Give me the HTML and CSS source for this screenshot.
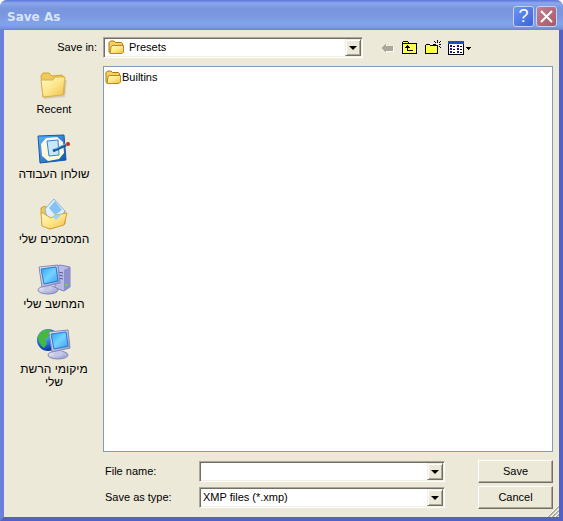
FILE: index.html
```html
<!DOCTYPE html>
<html lang="en">
<head>
  <meta charset="UTF-8">
  <title>Save As</title>
  <link rel="stylesheet" href="styles.css">
</head>
<body>

  <!-- Shared icons -->
  <svg class="defs" width="0" height="0" aria-hidden="true">
    <defs>
      <linearGradient id="gold" x1="0" y1="0" x2="1" y2="1">
        <stop offset="0" stop-color="#fffbc4"/>
        <stop offset="0.5" stop-color="#fde68a"/>
        <stop offset="1" stop-color="#eec04a"/>
      </linearGradient>
      <linearGradient id="screen" x1="0" y1="0" x2="1" y2="1">
        <stop offset="0" stop-color="#2aa0f5"/>
        <stop offset="0.5" stop-color="#74d4ff"/>
        <stop offset="1" stop-color="#3a9cf4"/>
      </linearGradient>
      <linearGradient id="metal" x1="0" y1="0" x2="1" y2="1">
        <stop offset="0" stop-color="#f4f5ff"/>
        <stop offset="1" stop-color="#8f93cc"/>
      </linearGradient>
      <linearGradient id="blue" x1="0" y1="0" x2="1" y2="1">
        <stop offset="0" stop-color="#5db4f4"/>
        <stop offset="1" stop-color="#0b50b4"/>
      </linearGradient>
      <radialGradient id="earth" cx="0.35" cy="0.3" r="0.75">
        <stop offset="0" stop-color="#6cc0ff"/>
        <stop offset="0.6" stop-color="#1a66dc"/>
        <stop offset="1" stop-color="#082c90"/>
      </radialGradient>
      <symbol id="folder" viewBox="0 0 16 16">
        <path d="M1 13V3.500L2.500 2H6L7.500 3.500H13.500L14.500 4.500V13L13.500 14H2Z" fill="#f5d060" stroke="#a87808"/>
        <path d="M4 6.500H15.500V13L14 14.500H2L3 8Z" fill="url(#gold)" stroke="#b98a18"/>
      </symbol>
      <symbol id="monitor" viewBox="0 0 24 32">
        <ellipse cx="11" cy="27" rx="10" ry="4" fill="url(#metal)" stroke="#8388b4"/>
        <path d="M8 21L15 20V27Q11 29 7 27Z" fill="#c4c8e8"/>
        <path d="M2 4L21 2L23 20L5 24Z" fill="url(#metal)" stroke="#8388b4"/>
        <path d="M4 6L19 4L21 18L7 21Z" fill="url(#screen)" stroke="#2a78cc"/>
      </symbol>
    </defs>
  </svg>

  <form class="dialog">
    <header class="titlebar">
      <h1>Save As</h1>
      <button type="button" class="caption help" aria-label="Help">?</button>
      <button type="button" class="caption close" aria-label="Close">
        <svg width="13" height="13" viewBox="0 0 13 13"><path d="M1 1L12 12M12 1L1 12" stroke="#fff" stroke-width="2"/></svg>
      </button>
    </header>

    <main class="content">
      <label class="look-label" for="folder-select">Save in:</label>
      <div class="lookbar">
        <div class="combo with-icon">
          <svg class="combo-icon" width="16" height="16"><use href="#folder"/></svg>
          <select id="folder-select"><option>Presets</option></select>
          <span class="arrow"></span>
        </div>
        <div class="tools">
          <button type="button" aria-label="Back" disabled>
            <svg width="16" height="16" viewBox="0 0 16 16" shape-rendering="crispEdges">
              <path d="M3 9L8 4V7H15V12H8V14Z" fill="#fff"/>
              <path d="M2 8L7 3V6H14V11H7V13Z" fill="#aca899"/>
            </svg>
          </button>
          <button type="button" aria-label="Up One Level">
            <svg width="16" height="16" viewBox="0 0 16 16" shape-rendering="crispEdges">
              <path d="M0 14V2H1V1H6V2H7V3H15V14Z" fill="#000"/>
              <path d="M1 13V4H14V13ZM1 2H6V3H1Z" fill="#ffff50"/>
              <path d="M5 5H6V6H7V7H8V8H6V10H11V11H5V8H3V7H4V6H5Z" fill="#000"/>
            </svg>
          </button>
          <button type="button" aria-label="Create New Folder">
            <svg width="16" height="16" viewBox="0 0 16 16" shape-rendering="crispEdges">
              <path d="M0 14V5H1V4H5V5H13V14Z" fill="#000"/>
              <path d="M1 13V6H12V13ZM1 5H5V6H1Z" fill="#ffff50"/>
              <path d="M12 0H13V3H12ZM12 6H13V9H12ZM8 4H11V5H8ZM14 4H16V5H14ZM9 1H10V2H9ZM10 2H11V3H10ZM15 1H16V2H15ZM14 2H15V3H14ZM14 6H15V7H14ZM15 7H16V8H15Z" fill="#000"/>
            </svg>
          </button>
          <button type="button" class="views" aria-label="View Menu">
            <svg width="23" height="16" viewBox="0 0 23 16" shape-rendering="crispEdges">
              <path d="M0 1H16V15H0Z" fill="#000"/>
              <path d="M1 4H15V14H1Z" fill="#fff"/>
              <path d="M0 1H16V4H0Z" fill="#1c50b8"/>
              <path d="M2 5H4V7H2ZM2 8H4V10H2ZM2 11H4V13H2ZM9 5H11V7H9ZM9 8H11V10H9ZM9 11H11V13H9Z" fill="#14149c"/>
              <path d="M5 6H7V7H5ZM5 9H7V10H5ZM5 12H7V13H5ZM12 6H14V7H12ZM12 9H14V10H12ZM12 12H14V13H12Z" fill="#000"/>
              <path d="M18 7H23V8H22V9H21V10H20V9H19V8H18Z" fill="#000"/>
            </svg>
          </button>
        </div>
      </div>

      <nav class="places">
        <button type="button">
          <svg width="32" height="32" viewBox="0 0 32 32">
            <path d="M6 30L26 28L28 12" fill="none" stroke="#d4cfba" stroke-width="2"/>
            <path d="M3 8L5 5H11L14 8L24 7L26 9V26L5 29Z" fill="#efc95a" stroke="#d3a436"/>
            <path d="M3 12L15 12L17 9H27L25 27L5 29Z" fill="url(#gold)" stroke="#dcb048"/>
          </svg>
          <span>Recent</span>
        </button>
        <button type="button">
          <svg width="34" height="32" viewBox="0 0 34 32">
            <path d="M1 3L27 2L29 27L3 30Z" fill="url(#blue)" stroke="#1758a8"/>
            <path d="M9 5L20 4L26 9L27 20L22 26L11 28L5 23L4 11Z" fill="#fff8dc"/>
            <path d="M10 8L21 7L22 22L12 23Z" fill="#c8e8ff" stroke="#2e86d8"/>
            <path d="M16 18L29 12" stroke="#185898" stroke-width="3"/>
            <path d="M18 16L28 11" stroke="#80c8f4"/>
            <circle cx="31" cy="11" r="2" fill="#c82818"/>
          </svg>
          <span lang="he" dir="rtl">שולחן העבודה</span>
        </button>
        <button type="button">
          <svg width="32" height="32" viewBox="0 0 32 32">
            <path d="M3 10L7 8L10 11L27 13L27 26L12 31L4 27Z" fill="#efc95a" stroke="#c99a28"/>
            <path d="M7 11L16 1L27 13L18 26L9 20Z" fill="#e0f0ff" stroke="#88b4dc"/>
            <path d="M11 10L17 3L24 12L17 17Z" fill="#86c2f2"/>
            <path d="M3 14L13 20L18 17L29 15L26 27L12 31L4 28Z" fill="url(#gold)" stroke="#d3a436"/>
            <path d="M14 18L24 16L18 22Z" fill="#9cd4f4"/>
          </svg>
          <span lang="he" dir="rtl">המסמכים שלי</span>
        </button>
        <button type="button">
          <svg width="34" height="32" viewBox="0 0 34 32">
            <path d="M18 5L23 2L33 4V24L27 28L18 25Z" fill="#b9bae6" stroke="#7f82bc"/>
            <path d="M27 7L33 4V24L27 28Z" fill="#8e90cc"/>
            <path d="M21 9L26 10M21 12L26 13M21 15L26 16" stroke="#5559a0"/>
            <path d="M28 22H31" stroke="#6ed040" stroke-width="2"/>
            <use href="#monitor" width="24" height="32"/>
          </svg>
          <span lang="he" dir="rtl">המחשב שלי</span>
        </button>
        <button type="button">
          <svg width="34" height="32" viewBox="0 0 34 32">
            <circle cx="11" cy="12" r="11" fill="url(#earth)"/>
            <path d="M3 5Q8 0 14 2L11 5L13 8L8 11L10 16L7 20Q1 16 1 9Z" fill="#46b83c"/>
            <path d="M16 3Q20 5 20 9L17 8Z" fill="#70d048"/>
            <use href="#monitor" x="10" width="24" height="32"/>
          </svg>
          <span lang="he" dir="rtl">מיקומי הרשת שלי</span>
        </button>
      </nav>

      <section class="files" aria-label="Files">
        <button type="button" class="file">
          <svg width="16" height="16"><use href="#folder"/></svg>
          <span>Builtins</span>
        </button>
      </section>

      <div class="fields">
        <label for="file-name">File name:</label>
        <div class="combo">
          <input id="file-name" type="text">
          <button type="button" class="arrow" aria-label="Show file names"></button>
        </div>
        <button type="submit" class="action">Save</button>

        <label for="file-type">Save as type:</label>
        <div class="combo">
          <select id="file-type"><option>XMP files (*.xmp)</option></select>
          <span class="arrow"></span>
        </div>
        <button type="button" class="action">Cancel</button>
      </div>
    </main>
    <svg class="grip" width="12" height="12" viewBox="0 0 12 12" aria-hidden="true">
      <path d="M1 12L12 1M5 12L12 5M9 12L12 9" stroke="#aca899" stroke-width="2"/>
      <path d="M0 12L12 0M4 12L12 4M8 12L12 8" stroke="#fff"/>
    </svg>
  </form>

</body>
</html>
```
FILE: styles.css
```css
* {
  box-sizing: border-box;
}
body {
  margin: 0;
  background: #fff;
  font-family: "Liberation Sans", Arial, sans-serif;
  font-size: 11px;
  line-height: 13px;
  color: #000;
}
button, input, select {
  font: inherit;
  color: inherit;
  margin: 0;
  padding: 0;
}
.defs {
  position: absolute;
}
.dialog {
  position: relative;
  display: flex;
  flex-direction: column;
  min-height: 100vh;
  border: 4px solid #6b7fdc;
  border-top: 0;
  border-color: #6b7fdc #5360c8 #5360c8 #6b7fdc;
  border-radius: 7px 7px 0 0;
  background: #ece9d8;
}

/* Title bar */
.titlebar {
  display: flex;
  align-items: center;
  gap: 2px;
  height: 30px;
  margin: 0 -4px;
  padding: 3px 6px 0 7px;
  border-radius: 7px 7px 0 0;
  background: linear-gradient(#5a75d8, #8ba8ee 3px, #7a96df 8px, #7a96df 14px, #82a4ea 24px, #7d9ae4 27px, #6a82d4);
}
.titlebar h1 {
  flex: 1;
  margin: 0;
  font-family: "DejaVu Sans", sans-serif;
  font-size: 12px;
  line-height: 16px;
  color: #d8e4f8;
}
.caption {
  display: flex;
  align-items: center;
  justify-content: center;
  width: 21px;
  height: 21px;
  border: 1px solid #c6d2f5;
  border-radius: 3px;
  color: #fff;
}
.help {
  background: linear-gradient(135deg, #6f94f0, #3a63dc);
  font-size: 18px;
}
.close {
  background: linear-gradient(135deg, #c08090, #a85868);
}

/* Layout */
.content {
  flex: 1;
  display: grid;
  grid-template-columns: 93px 1fr;
  grid-template-rows: auto 1fr auto;
  gap: 8px 6px;
  padding: 7px 6px 8px 0;
}
.look-label {
  align-self: center;
  text-align: right;
}
.lookbar {
  display: flex;
  align-items: center;
  gap: 16px;
}
.lookbar .combo {
  width: 260px;
}
.tools {
  display: flex;
  gap: 7px;
}
.tools button {
  display: flex;
  border: 0;
  background: none;
}

/* Combo boxes */
.combo {
  position: relative;
  height: 21px;
  padding: 1px;
  border: 1px solid;
  border-color: #aca899 #fff #fff #aca899;
  background: #fff;
  box-shadow: inset 1px 1px #716f64, inset -1px -1px #f1efe2;
}
.combo select,
.combo input {
  display: block;
  width: 100%;
  height: 17px;
  padding: 0 18px 0 2px;
  border: 0;
  background: transparent;
  appearance: none;
  outline: 0;
}
.with-icon select {
  padding-left: 24px;
}
.combo-icon {
  position: absolute;
  left: 4px;
  top: 1px;
}
.arrow {
  position: absolute;
  top: 1px;
  right: 1px;
  width: 16px;
  height: 17px;
  border: 1px solid;
  border-color: #f1efe2 #716f64 #716f64 #f1efe2;
  background: #ece9d8;
  box-shadow: inset 1px 1px #fff, inset -1px -1px #aca899;
}
span.arrow {
  pointer-events: none;
}
.arrow::after {
  content: "";
  position: absolute;
  top: 6px;
  left: 3px;
  border: 4px solid transparent;
  border-top-color: #000;
  border-bottom: 0;
}

/* Places bar */
.places {
  display: flex;
  flex-direction: column;
  align-items: center;
  gap: 17px;
  padding: 2px 0 0 7px;
}
.places button {
  display: flex;
  flex-direction: column;
  align-items: center;
  gap: 3px;
  width: 84px;
  border: 0;
  background: none;
}
.places span:lang(he) {
  font-size: 12px;
}

/* File list */
.files {
  padding: 2px 1px;
  border: 1px solid #7f9db9;
  background: #fff;
}
.file {
  display: flex;
  align-items: center;
  gap: 1px;
  border: 0;
  background: none;
}

/* File name and type */
.fields {
  grid-column: 2;
  display: grid;
  grid-template-columns: 88px minmax(0, 1fr) 75px;
  align-items: center;
  gap: 3px 0;
  padding-left: 2px;
}
.fields .combo {
  margin: 0 33px 0 6px;
}
.action {
  height: 23px;
  border: 1px solid;
  border-color: #fff #716f64 #716f64 #fff;
  background: #ece9d8;
  box-shadow: inset -1px -1px #aca899;
}

.grip {
  position: absolute;
  right: 0;
  bottom: 0;
}
```
